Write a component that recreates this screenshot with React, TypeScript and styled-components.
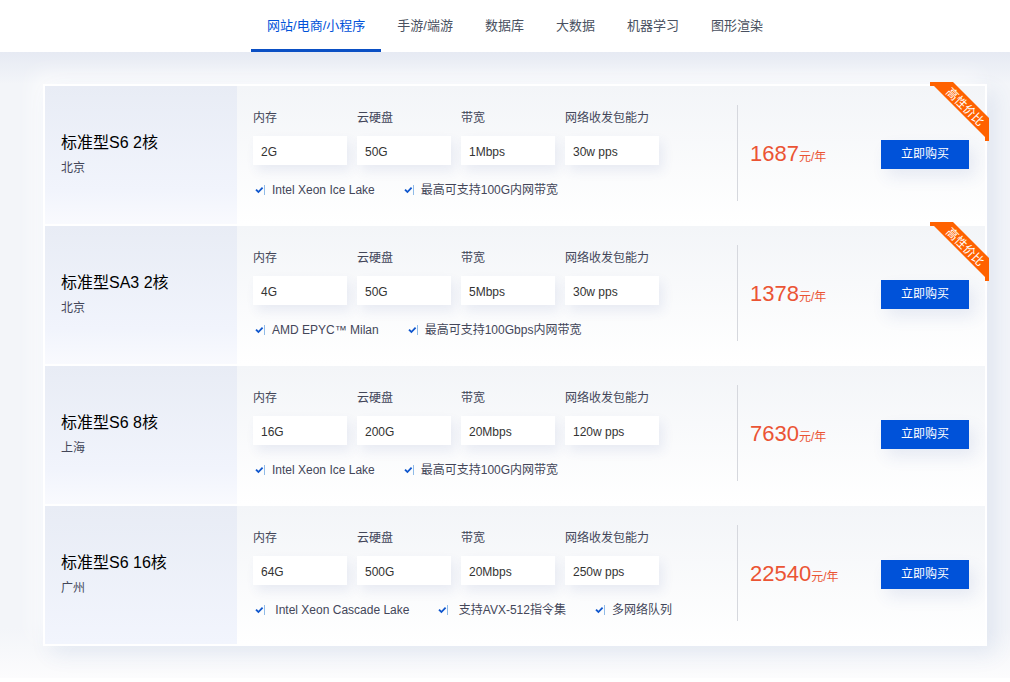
import React from 'react';
import styled, { createGlobalStyle } from 'styled-components';

const GlobalStyle = createGlobalStyle`
  *, *::before, *::after { box-sizing: border-box; }
  body {
    margin: 0;
    background: #fff;
    color: #434659;
    font-family: "Liberation Sans", "Noto Sans CJK SC", sans-serif;
    font-size: 12px;
    line-height: 18px;
  }
`;

const Tabs = styled.nav`
  display: flex;
  justify-content: center;
  height: 52px;
  padding-left: 20px;
  background: #fff;
`;

const Tab = styled.a<{ $active?: boolean }>`
  padding: 0 16px;
  font-size: 13px;
  line-height: 52px;
  white-space: nowrap;
  text-decoration: none;
  color: ${(p) => (p.$active ? '#0052d9' : '#495060')};
  box-shadow: ${(p) => (p.$active ? 'inset 0 -3px 0 #0a4fc4' : 'none')};
`;

const Section = styled.main`
  padding: 32px 23px 32px 43px;
  background:
    linear-gradient(#e6eaf3, rgba(243, 245, 249, 0)) top / 100% 32px no-repeat,
    linear-gradient(#f3f5f9 92%, #fcfcfd);
`;

const PlanList = styled.ul`
  display: flex;
  flex-direction: column;
  gap: 2px;
  margin: 0;
  padding: 0;
  list-style: none;
  border: 2px solid #fff;
  background: #fff;
  box-shadow: 8px 8px 20px rgba(55, 99, 170, 0.1), -8px -8px 20px rgba(255, 255, 255, 0.8);
`;

const Plan = styled.li`
  position: relative;
  display: flex;
  height: 138px;
  background: linear-gradient(#f3f5f8, #fff);
`;

const Summary = styled.header`
  flex: 0 0 192px;
  padding: 46px 16px 0;
  background: linear-gradient(#e8ecf5, #f1f4fc 75%, #f9fafe);

  ${Plan}:last-child & {
    background: linear-gradient(#e8ecf5, #f2f5fd);
  }
`;

const PlanName = styled.h2`
  margin: 0;
  font-size: 16px;
  font-weight: 400;
  line-height: 22px;
  color: #000;
`;

const Region = styled.p`
  margin: 5px 0 0;
`;

const Details = styled.div`
  flex: 1;
  padding: 23px 0 0 16px;
`;

const Specs = styled.dl`
  display: flex;
  gap: 10px;
  margin: 0;
`;

const Spec = styled.div`
  width: 94px;
`;

const SpecLabel = styled.dt`
  white-space: nowrap;
`;

const SpecValue = styled.dd`
  margin: 9px 0 0;
  padding: 2px 8px 0;
  height: 29px;
  line-height: 29px;
  color: #333;
  background: #fff;
  box-shadow: 4px 6px 12px rgba(60, 80, 150, 0.09);
`;

const Features = styled.ul`
  display: flex;
  gap: 27px;
  margin: 16px 0 0;
  padding: 0;
  list-style: none;
`;

const Feature = styled.li`
  display: flex;
  align-items: center;
  gap: 7px;
  white-space: nowrap;
`;

const Order = styled.div`
  display: flex;
  align-items: center;
  justify-content: space-between;
  flex: 0 0 248px;
  height: 96px;
  margin-top: 19px;
  padding: 2px 16px 0 12px;
  border-left: 1px solid #d6d8de;
`;

const Price = styled.p`
  margin: 0;
  padding-top: 3px;
  font-size: 12px;
  line-height: 28px;
  color: #eb5434;
`;

const Amount = styled.span`
  font-size: 22px;
`;

const BuyButton = styled.button`
  width: 88px;
  height: 29px;
  padding: 0;
  border: 0;
  background: #0052d9;
  color: #fff;
  font: inherit;
  cursor: pointer;
  box-shadow: 6px 8px 16px rgba(60, 90, 170, 0.1);
`;

const Ribbon = styled.div`
  position: absolute;
  top: -4px;
  right: -4px;
  width: 59px;
  height: 59px;
  overflow: hidden;
  background: #ff6200;
  clip-path: polygon(0 0, 23px 0, 59px 36px, 59px 59px, 55px 59px, 55px 55px, 4px 4px, 0 4px);
`;

const RibbonText = styled.span`
  position: absolute;
  top: 16px;
  left: 5px;
  width: 60px;
  line-height: 18px;
  text-align: center;
  color: #fff;
  transform: rotate(45deg);
`;

const CheckIcon = () => (
  <svg width="12" height="12" viewBox="0 0 12 12" fill="none" aria-hidden="true">
    <path d="M3 5.6 5.4 8 9.6 3.6" stroke="#0f56cd" strokeWidth="1.8" />
    <path d="M11.5 1v10" stroke="#8fbbe8" />
  </svg>
);

const tabs = ['网站/电商/小程序', '手游/端游', '数据库', '大数据', '机器学习', '图形渲染'];
const labels = ['内存', '云硬盘', '带宽', '网络收发包能力'];

const plans = [
  {
    name: '标准型S6 2核', region: '北京', price: '1687', hot: true,
    specs: ['2G', '50G', '1Mbps', '30w pps'],
    features: ['Intel Xeon Ice Lake', '最高可支持100G内网带宽'],
  },
  {
    name: '标准型SA3 2核', region: '北京', price: '1378', hot: true,
    specs: ['4G', '50G', '5Mbps', '30w pps'],
    features: ['AMD EPYC™ Milan', '最高可支持100Gbps内网带宽'],
  },
  {
    name: '标准型S6 8核', region: '上海', price: '7630', hot: false,
    specs: ['16G', '200G', '20Mbps', '120w pps'],
    features: ['Intel Xeon Ice Lake', '最高可支持100G内网带宽'],
  },
  {
    name: '标准型S6 16核', region: '广州', price: '22540', hot: false,
    specs: ['64G', '500G', '20Mbps', '250w pps'],
    features: ['\u00a0Intel Xeon Cascade Lake', '\u00a0支持AVX-512指令集', '多网络队列'],
  },
];

export default function App() {
  return (
    <>
      <GlobalStyle />
      <Tabs>
        {tabs.map((tab, i) => (
          <Tab key={tab} href="#plans" $active={i === 0}>{tab}</Tab>
        ))}
      </Tabs>
      <Section id="plans">
        <PlanList>
          {plans.map((plan) => (
            <Plan key={plan.name}>
              <Summary>
                <PlanName>{plan.name}</PlanName>
                <Region>{plan.region}</Region>
              </Summary>
              <Details>
                <Specs>
                  {plan.specs.map((value, i) => (
                    <Spec key={labels[i]}>
                      <SpecLabel>{labels[i]}</SpecLabel>
                      <SpecValue>{value}</SpecValue>
                    </Spec>
                  ))}
                </Specs>
                <Features>
                  {plan.features.map((feature) => (
                    <Feature key={feature}><CheckIcon />{feature}</Feature>
                  ))}
                </Features>
              </Details>
              <Order>
                <Price><Amount>{plan.price}</Amount>元/年</Price>
                <BuyButton type="button">立即购买</BuyButton>
              </Order>
              {plan.hot && <Ribbon><RibbonText>高性价比</RibbonText></Ribbon>}
            </Plan>
          ))}
        </PlanList>
      </Section>
    </>
  );
}
